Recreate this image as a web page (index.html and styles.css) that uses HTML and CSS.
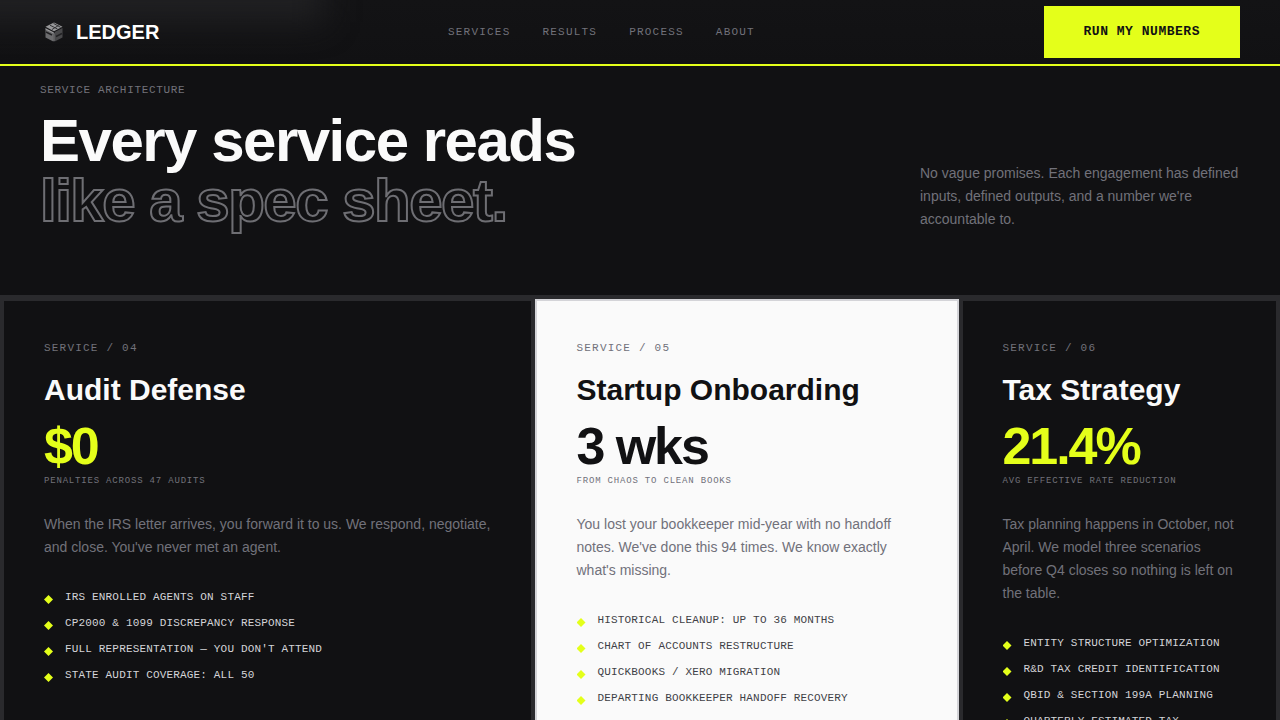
FILE: index.html
```html
<!DOCTYPE html>
<html lang="en">
<head>
<meta charset="utf-8">
<meta name="viewport" content="width=device-width, initial-scale=1">
<title>Ledger</title>
<link rel="stylesheet" href="styles.css">
</head>
<body>
<header class="header">
  <a class="brand" href="#">
    <svg class="brand-mark" viewBox="0 0 28 28" aria-hidden="true">
      <path d="M14 4.5 22.500 8.800 14 13.200 5.500 8.800Z" fill="#98989a"/>
      <path d="M10 7.200 17.500 11M13.500 5.400 20.500 9.300M12 11.500l6.500-4" stroke="#333335" stroke-width="1" fill="none"/>
      <path d="M5.500 10 13.300 14v9.500L5.500 19.500Z" fill="#6c6c6e"/>
      <path d="M22.500 10 14.700 14v9.500l7.800-4Z" fill="#48484a"/>
      <path d="M6 14l6 3M16 18.500l6-3" stroke="#222224" stroke-width="1.500" fill="none"/>
      <path d="M5.500 11 14 15.200v8" stroke="#98989a" stroke-width="1" fill="none"/>
    </svg>
    <span>LEDGER</span>
  </a>
  <nav class="nav">
    <a href="#services">Services</a>
    <a href="#results">Results</a>
    <a href="#process">Process</a>
    <a href="#about">About</a>
  </nav>
  <button class="cta" type="button">Run my numbers</button>
</header>
<main>
  <section class="intro">
    <div>
      <p class="eyebrow">Service architecture</p>
      <h1 class="headline">Every service reads<br><span class="outline">like a spec sheet.</span></h1>
    </div>
    <p class="lede">No vague promises. Each engagement has defined inputs, defined outputs, and a number we're accountable to.</p>
  </section>
  <section class="grid" id="services">
    <article class="card card-wide">
      <p class="card-index">Service / 04</p>
      <h2 class="card-title">Audit Defense</h2>
      <p class="metric">$0</p>
      <p class="metric-label">Penalties across 47 audits</p>
      <p class="card-text">When the IRS letter arrives, you forward it to us. We respond, negotiate, and close. You've never met an agent.</p>
      <ul class="specs">
        <li>IRS enrolled agents on staff</li>
        <li>CP2000 &amp; 1099 discrepancy response</li>
        <li>Full representation — you don't attend</li>
        <li>State audit coverage: all 50</li>
      </ul>
    </article>
    <article class="card card-medium card-light">
      <p class="card-index">Service / 05</p>
      <h2 class="card-title">Startup Onboarding</h2>
      <p class="metric">3 wks</p>
      <p class="metric-label">From chaos to clean books</p>
      <p class="card-text">You lost your bookkeeper mid-year with no handoff notes. We've done this 94 times. We know exactly what's missing.</p>
      <ul class="specs">
        <li>Historical cleanup: up to 36 months</li>
        <li>Chart of accounts restructure</li>
        <li>QuickBooks / Xero migration</li>
        <li>Departing bookkeeper handoff recovery</li>
      </ul>
    </article>
    <article class="card card-narrow">
      <p class="card-index">Service / 06</p>
      <h2 class="card-title">Tax Strategy</h2>
      <p class="metric">21.4%</p>
      <p class="metric-label">Avg effective rate reduction</p>
      <p class="card-text">Tax planning happens in October, not April. We model three scenarios before Q4 closes so nothing is left on the table.</p>
      <ul class="specs">
        <li>Entity structure optimization</li>
        <li>R&amp;D tax credit identification</li>
        <li>QBID &amp; Section 199A planning</li>
        <li>Quarterly estimated tax</li>
      </ul>
    </article>
  </section>
</main>
</body>
</html>
```
FILE: styles.css
```css
:root {
  --ink: #111113;
  --line: #2a2a2d;
  --paper: #fafafa;
  --muted: #71717a;
  --lime: #e4ff1a;
  --sans: "Liberation Sans", Arial, sans-serif;
  --mono: "Liberation Mono", "Courier New", monospace;
}

* { box-sizing: border-box; margin: 0; padding: 0; }

body {
  background: var(--ink);
  color: var(--paper);
  font-family: var(--sans);
}

.header {
  position: sticky;
  top: 0;
  z-index: 2;
  display: flex;
  align-items: center;
  justify-content: space-between;
  height: 66px;
  padding: 0 40px;
  overflow: hidden;
  background: linear-gradient(#131315, #111113);
  border-bottom: 2px solid var(--lime);
}

/* soft light in the header's left corner */
.header::before {
  content: "";
  position: absolute;
  z-index: -1;
  top: -60px;
  left: -60px;
  width: 384px;
  height: 82px;
  background: #202022;
  filter: blur(16px);
}

.brand {
  display: flex;
  align-items: center;
  gap: 8px;
  color: #fff;
  font-size: 20px;
  font-weight: 700;
  text-decoration: none;
}

.brand-mark { width: 28px; height: 28px; }

.nav { display: flex; gap: 32px; }

.nav a {
  color: var(--muted);
  font-family: var(--mono);
  font-size: 11px;
  letter-spacing: 0.11em;
  text-decoration: none;
  text-transform: uppercase;
}

.cta {
  padding: 16px 40px;
  border: 0;
  background: var(--lime);
  color: var(--ink);
  font-family: var(--mono);
  font-size: 13px;
  font-weight: 700;
  line-height: 20px;
  letter-spacing: 0.04em;
  text-transform: uppercase;
}

.intro {
  display: grid;
  grid-template-columns: 1fr 320px;
  align-items: end;
  gap: 64px;
  padding: 16px 40px 64px;
}

.eyebrow,
.card-index,
.metric-label {
  color: var(--muted);
  font-family: var(--mono);
  font-size: 11px;
  line-height: 16px;
  text-transform: uppercase;
}

.eyebrow { margin-bottom: 13px; letter-spacing: 0.06em; }

.headline {
  font-size: 60px;
  line-height: 60px;
  letter-spacing: -0.025em;
}

.outline {
  color: transparent;
  -webkit-text-stroke: 2px #6e6e73;
}

.lede {
  color: var(--muted);
  font-size: 14px;
  line-height: 23px;
}

.grid {
  display: grid;
  grid-template-columns: repeat(12, 1fr);
  gap: 2px;
  padding: 4px 2px;
  background: var(--line);
}

.card {
  padding: 40px;
  border: 2px solid var(--line);
  background: var(--ink);
}

.card-wide { grid-column: span 5; }
.card-medium { grid-column: span 4; }
.card-narrow { grid-column: span 3; }

.card-index {
  margin-bottom: 18px;
  line-height: 14px;
  letter-spacing: 0.11em;
}

.card-title {
  margin-bottom: 13px;
  font-size: 30px;
  line-height: 34px;
}

.metric {
  margin-bottom: 1px;
  color: var(--lime);
  font-size: 52px;
  font-weight: 700;
  line-height: 52px;
  letter-spacing: -0.04em;
}

.metric-label {
  margin-bottom: 24px;
  font-size: 9px;
  letter-spacing: 0.09em;
}

.card-text {
  margin-bottom: 30px;
  color: var(--muted);
  font-size: 14px;
  line-height: 23px;
}

.specs {
  display: grid;
  gap: 10px;
  list-style: none;
  color: #d4d4d8;
  font-family: var(--mono);
  font-size: 11px;
  line-height: 16px;
  letter-spacing: 0.015em;
  text-transform: uppercase;
}

.specs li { display: flex; gap: 12px; }

.specs li::before {
  content: "";
  flex: none;
  width: 9px;
  height: 9px;
  margin-top: 6px;
  background: var(--lime);
  clip-path: polygon(50% 0, 100% 50%, 50% 100%, 0 50%);
}

.card-light {
  border-color: #d4d4d8;
  background: var(--paper);
  color: var(--ink);
}

.card-light .metric { color: var(--ink); }
.card-light .specs { color: #3f3f46; }
```
